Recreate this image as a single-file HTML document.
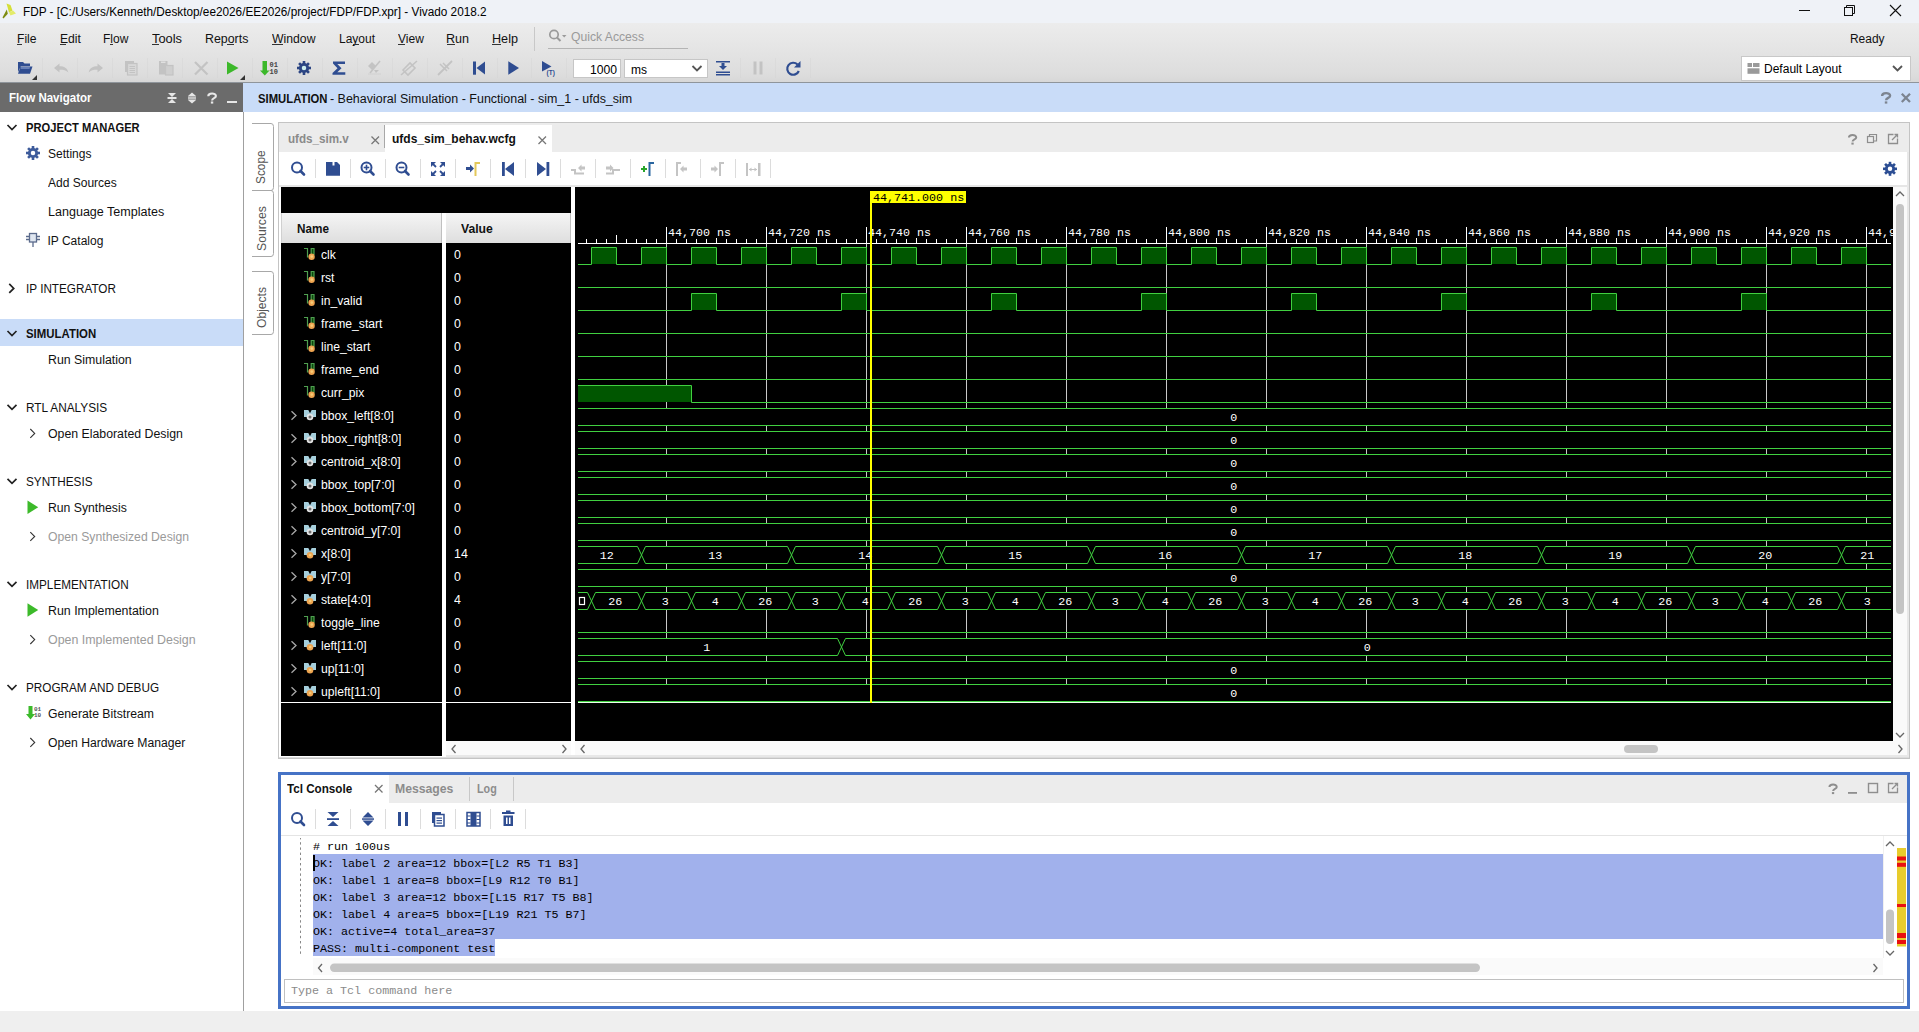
<!DOCTYPE html>
<html><head><meta charset="utf-8"><style>
html,body{margin:0;padding:0;width:1919px;height:1032px;overflow:hidden;background:#fff;}
body{position:relative;font-family:"Liberation Sans",sans-serif;}
div{position:absolute;box-sizing:border-box;}
.t{white-space:nowrap;}
svg{overflow:hidden;}
</style></head><body>
<div style="left:0px;top:0px;width:1919px;height:23px;background:#eff2f7;"></div>
<svg style="position:absolute;left:0px;top:0px;" width="22" height="23" viewBox="0 0 22 23"><path d="M2.5 17.5 L6.8 9.5 L7.8 13.8 L3.5 18.5 Z" fill="#7d8c12"/><path d="M6.5 3.5 L10.5 5 L12.5 10.5 L9 12.5 Z" fill="#d5df3a"/><path d="M9 12.5 L13 10.5 L16 13.5 L10.5 15.5 Z" fill="#e3eb6a"/></svg>
<div class="t" style="left:23.00px;top:6.00px;font-size:12px;line-height:13.20px;color:#000;font-weight:normal;font-family:'Liberation Sans', sans-serif;transform:scaleX(0.9818);transform-origin:0 0;">FDP - [C:/Users/Kenneth/Desktop/ee2026/EE2026/project/FDP/FDP.xpr] - Vivado 2018.2</div>
<svg style="position:absolute;left:1790px;top:0px;" width="129" height="23" viewBox="1790 0 129 23"><path d="M1799 10.5 H1810" stroke="#111" stroke-width="1"/><rect x="1844.5" y="7.5" width="8" height="8" fill="none" stroke="#111"/><path d="M1846.5 7.5 V5.5 H1854.5 V13.5 H1852.5" fill="none" stroke="#111"/><path d="M1890 5 L1901 16 M1901 5 L1890 16" stroke="#111" stroke-width="1.1"/></svg>
<div style="left:0px;top:23px;width:1919px;height:60px;background:linear-gradient(#ececec,#e7e7e7 30%,#dddddd 85%,#d7d7d7);"></div>
<div style="left:0px;top:82px;width:1919px;height:1px;background:#8f959b;"></div>
<div class="t" style="left:17.00px;top:33.00px;font-size:12px;line-height:13.20px;color:#111;font-weight:normal;font-family:'Liberation Sans', sans-serif;transform:scaleX(1.0093);transform-origin:0 0;">File</div>
<div class="t" style="left:60.00px;top:33.00px;font-size:12px;line-height:13.20px;color:#111;font-weight:normal;font-family:'Liberation Sans', sans-serif;transform:scaleX(1.0116);transform-origin:0 0;">Edit</div>
<div class="t" style="left:103.00px;top:33.00px;font-size:12px;line-height:13.20px;color:#111;font-weight:normal;font-family:'Liberation Sans', sans-serif;transform:scaleX(1.0024);transform-origin:0 0;">Flow</div>
<div class="t" style="left:152.00px;top:33.00px;font-size:12px;line-height:13.20px;color:#111;font-weight:normal;font-family:'Liberation Sans', sans-serif;transform:scaleX(1.0730);transform-origin:0 0;">Tools</div>
<div class="t" style="left:205.00px;top:33.00px;font-size:12px;line-height:13.20px;color:#111;font-weight:normal;font-family:'Liberation Sans', sans-serif;transform:scaleX(1.0310);transform-origin:0 0;">Reports</div>
<div class="t" style="left:272.00px;top:33.00px;font-size:12px;line-height:13.20px;color:#111;font-weight:normal;font-family:'Liberation Sans', sans-serif;transform:scaleX(1.0183);transform-origin:0 0;">Window</div>
<div class="t" style="left:339.00px;top:33.00px;font-size:12px;line-height:13.20px;color:#111;font-weight:normal;font-family:'Liberation Sans', sans-serif;transform:scaleX(1.0000);transform-origin:0 0;">Layout</div>
<div class="t" style="left:398.00px;top:33.00px;font-size:12px;line-height:13.20px;color:#111;font-weight:normal;font-family:'Liberation Sans', sans-serif;transform:scaleX(1.0031);transform-origin:0 0;">View</div>
<div class="t" style="left:446.00px;top:33.00px;font-size:12px;line-height:13.20px;color:#111;font-weight:normal;font-family:'Liberation Sans', sans-serif;transform:scaleX(1.0474);transform-origin:0 0;">Run</div>
<div class="t" style="left:492.00px;top:33.00px;font-size:12px;line-height:13.20px;color:#111;font-weight:normal;font-family:'Liberation Sans', sans-serif;transform:scaleX(1.0518);transform-origin:0 0;">Help</div>
<div style="left:17px;top:44px;width:5px;height:1px;background:#333;"></div>
<div style="left:60px;top:44px;width:6px;height:1px;background:#333;"></div>
<div style="left:110px;top:44px;width:3px;height:1px;background:#333;"></div>
<div style="left:152px;top:44px;width:7px;height:1px;background:#333;"></div>
<div style="left:227px;top:44px;width:7px;height:1px;background:#333;"></div>
<div style="left:272px;top:44px;width:11px;height:1px;background:#333;"></div>
<div style="left:353px;top:44px;width:6px;height:1px;background:#333;"></div>
<div style="left:398px;top:44px;width:7px;height:1px;background:#333;"></div>
<div style="left:447px;top:44px;width:8px;height:1px;background:#333;"></div>
<div style="left:492px;top:44px;width:9px;height:1px;background:#333;"></div>
<div style="left:534px;top:27px;width:1px;height:24px;background:#c8c8c8;"></div>
<svg style="position:absolute;left:545px;top:27px;" width="30" height="20" viewBox="545 27 30 20"><circle cx="554" cy="34.5" r="4.2" fill="none" stroke="#9a9a9a" stroke-width="1.7"/><path d="M557 37.5 L560.5 41" stroke="#9a9a9a" stroke-width="2"/><path d="M562 35 L566.5 35 L564.2 37.5 Z" fill="#9a9a9a"/></svg>
<div class="t" style="left:571.00px;top:31.00px;font-size:12px;line-height:13.20px;color:#9a9a9a;font-weight:normal;font-family:'Liberation Sans', sans-serif;transform:scaleX(1.0139);transform-origin:0 0;">Quick Access</div>
<div style="left:548px;top:48px;width:140px;height:1px;background:#b4b4b4;"></div>
<div class="t" style="left:1850.00px;top:33.00px;font-size:12px;line-height:13.20px;color:#111;font-weight:normal;font-family:'Liberation Sans', sans-serif;transform:scaleX(0.9948);transform-origin:0 0;">Ready</div>
<div style="left:573px;top:59px;width:48px;height:19px;background:#fff;border:1px solid #c6c6c6;"></div>
<div class="t" style="left:590.00px;top:64.00px;font-size:12px;line-height:13.20px;color:#000;font-weight:normal;font-family:'Liberation Sans', sans-serif;transform:scaleX(1.0135);transform-origin:0 0;">1000</div>
<div style="left:624px;top:59px;width:84px;height:19px;background:#fff;border:1px solid #c6c6c6;"></div>
<div class="t" style="left:631.00px;top:64.00px;font-size:12px;line-height:13.20px;color:#000;font-weight:normal;font-family:'Liberation Sans', sans-serif;transform:scaleX(1.0025);transform-origin:0 0;">ms</div>
<svg style="position:absolute;left:0px;top:52px;" width="830" height="31" viewBox="0 52 830 31"><path d="M18 62 H23 L24.5 63.5 H30 V66 H21 L18 72 Z" fill="#2f4d91"/><path d="M20.5 66.5 H32.5 L30 73.8 H18 Z" fill="#2f4d91"/><path d="M21 67.5 H30 L29.5 68.5 H20.5Z" fill="#9fb3df"/><path d="M37 75 V80 H32 Z" fill="#333"/><path d="M54 68 L59.5 63.5 V66.3 C64 66.3 67.5 68 68.3 72.5 C66.5 70.2 63.5 69.7 59.5 69.7 V72.5 Z" fill="#c3c3c3"/><path d="M103 68 L97.5 63.5 V66.3 C93 66.3 89.5 68 88.7 72.5 C90.5 70.2 93.5 69.7 97.5 69.7 V72.5 Z" fill="#c3c3c3"/><rect x="125" y="61" width="9" height="11" fill="#c3c3c3"/><rect x="127.5" y="63.5" width="9.5" height="11.5" fill="#d8d8d8" stroke="#c3c3c3" stroke-width="1.2"/><path d="M129.5 66.5 H135" stroke="#c3c3c3" stroke-width="1"/><path d="M129.5 68.5 H135" stroke="#c3c3c3" stroke-width="1"/><path d="M129.5 70.5 H135" stroke="#c3c3c3" stroke-width="1"/><path d="M129.5 72.5 H135" stroke="#c3c3c3" stroke-width="1"/><rect x="159" y="61" width="8.5" height="13.5" fill="#c3c3c3"/><rect x="165.5" y="65.5" width="7.5" height="9.5" fill="#cfcfcf" stroke="#c3c3c3" stroke-width="1.2"/><rect x="161" y="61.5" width="4.5" height="1.5" fill="#e0e0e0"/><path d="M195 62 L207.5 74.5 M207.5 62 L195 74.5" stroke="#c3c3c3" stroke-width="2.2"/><path d="M227 61.6 L238.5 68 L227 74.5 Z" fill="#3cb82a"/><path d="M245 75 V80 H240 Z" fill="#333"/><path d="M262.5 61 H267 V70.5 H269.5 L264.8 75.5 L260 70.5 H262.5 Z" fill="#3cb82a"/><text x="269.5" y="67" font-family="Liberation Mono" font-weight="bold" font-size="7" fill="#444">01</text><text x="269.5" y="74" font-family="Liberation Mono" font-weight="bold" font-size="7" fill="#444">10</text><rect x="302.7" y="61" width="2.6" height="3.6" fill="#2c4583" transform="rotate(0 304 68)"/><rect x="302.7" y="61" width="2.6" height="3.6" fill="#2c4583" transform="rotate(45 304 68)"/><rect x="302.7" y="61" width="2.6" height="3.6" fill="#2c4583" transform="rotate(90 304 68)"/><rect x="302.7" y="61" width="2.6" height="3.6" fill="#2c4583" transform="rotate(135 304 68)"/><rect x="302.7" y="61" width="2.6" height="3.6" fill="#2c4583" transform="rotate(180 304 68)"/><rect x="302.7" y="61" width="2.6" height="3.6" fill="#2c4583" transform="rotate(225 304 68)"/><rect x="302.7" y="61" width="2.6" height="3.6" fill="#2c4583" transform="rotate(270 304 68)"/><rect x="302.7" y="61" width="2.6" height="3.6" fill="#2c4583" transform="rotate(315 304 68)"/><circle cx="304" cy="68" r="5.109999999999999" fill="#2c4583"/><circle cx="304" cy="68" r="2.24" fill="#cdeeee"/><path d="M333 61.5 H345 V64 H337.3 L341.5 68.2 L337.3 72.3 H345.3 V74.7 H332.5 V73 L337.5 68.2 L333 63.4 Z" fill="#2f4d91"/><path d="M368 74 H381" stroke="#d4d4d4" stroke-width="1.5"/><path d="M368 66 L372 62 L376 66 L372 70 Z" fill="#c3c3c3"/><path d="M370 73 L380 61" stroke="#c3c3c3" stroke-width="1.6"/><path d="M374 70 L379 70 L376 73Z" fill="#c3c3c3"/><path d="M403 70 L410 63 L415 68 L408 75 Z" fill="none" stroke="#c3c3c3" stroke-width="1.6"/><path d="M401 75 L417 61" stroke="#c3c3c3" stroke-width="1.6"/><path d="M438 75 L452 61" stroke="#c3c3c3" stroke-width="1.8"/><path d="M440 64 L447 71 M443 63 L449 69" stroke="#c3c3c3" stroke-width="1.5"/><rect x="473" y="61.5" width="3" height="13.2" fill="#2f4d91"/><path d="M485 61.5 V74.5 L476.5 68 Z" fill="#2f4d91"/><path d="M508.3 61.2 L519 68 L508.3 74.7 Z" fill="#2f4d91"/><path d="M542 61 L551.5 66.5 L542 71.5 Z" fill="#2f4d91"/><text x="546.5" y="75" font-family="Liberation Sans" font-weight="bold" font-size="6.5" fill="#2f4d91">(T)</text><path d="M692.5 66 L697 70.5 L701.5 66" fill="none" stroke="#555" stroke-width="1.8"/><rect x="716" y="61" width="14" height="1.5" fill="#2f4d91"/><path d="M721.5 63 H724.5 V66 H727 L723 70 L719 66 H721.5 Z" fill="#2f4d91"/><rect x="716" y="71.5" width="14" height="1.5" fill="#2f4d91"/><rect x="716" y="74" width="14" height="1.5" fill="#2f4d91"/><rect x="753.5" y="61.5" width="3" height="13" fill="#c3c3c3"/><rect x="759.5" y="61.5" width="3" height="13" fill="#c3c3c3"/><path d="M797.5 64.5 A6 6 0 1 0 798.8 71" fill="none" stroke="#2f4d91" stroke-width="2.2"/><path d="M800.5 61 V67.5 H794 Z" fill="#2f4d91"/><rect x="42" y="58" width="1" height="20" fill="#d0d0d0" opacity="0.35"/><rect x="77" y="58" width="1" height="20" fill="#d0d0d0" opacity="0.35"/><rect x="112" y="58" width="1" height="20" fill="#d0d0d0" opacity="0.35"/><rect x="147" y="58" width="1" height="20" fill="#d0d0d0" opacity="0.35"/><rect x="182" y="58" width="1" height="20" fill="#d0d0d0" opacity="0.35"/><rect x="217" y="58" width="1" height="20" fill="#d0d0d0" opacity="0.35"/><rect x="252" y="58" width="1" height="20" fill="#d0d0d0" opacity="0.35"/><rect x="287" y="58" width="1" height="20" fill="#d0d0d0" opacity="0.35"/><rect x="322" y="58" width="1" height="20" fill="#d0d0d0" opacity="0.35"/><rect x="357" y="58" width="1" height="20" fill="#d0d0d0" opacity="0.35"/><rect x="392" y="58" width="1" height="20" fill="#d0d0d0" opacity="0.35"/><rect x="427" y="58" width="1" height="20" fill="#d0d0d0" opacity="0.35"/><rect x="462" y="58" width="1" height="20" fill="#d0d0d0" opacity="0.35"/><rect x="497" y="58" width="1" height="20" fill="#d0d0d0" opacity="0.35"/><rect x="531" y="58" width="1" height="20" fill="#d0d0d0" opacity="0.35"/><rect x="566" y="58" width="1" height="20" fill="#d0d0d0" opacity="0.35"/><rect x="740" y="58" width="1" height="20" fill="#d0d0d0" opacity="0.35"/><rect x="775" y="58" width="1" height="20" fill="#d0d0d0" opacity="0.35"/><rect x="810" y="58" width="1" height="20" fill="#d0d0d0" opacity="0.35"/></svg>
<div style="left:1741px;top:56px;width:170px;height:25px;background:#fff;border:1px solid #c8c8c8;"></div>
<svg style="position:absolute;left:1745px;top:60px;" width="20" height="18" viewBox="1745 60 20 18"><rect x="1747.5" y="63" width="4.5" height="4" fill="#9a9a9a"/><rect x="1753" y="63" width="6.5" height="4" fill="#9a9a9a"/><rect x="1747.5" y="68.3" width="12" height="5.5" fill="#9a9a9a"/></svg>
<div class="t" style="left:1764.00px;top:63.00px;font-size:12px;line-height:13.20px;color:#000;font-weight:normal;font-family:'Liberation Sans', sans-serif;transform:scaleX(1.0013);transform-origin:0 0;">Default Layout</div>
<svg style="position:absolute;left:1880px;top:60px;" width="25" height="18" viewBox="1880 60 25 18"><path d="M1893 66 L1897.5 70.5 L1902 66" fill="none" stroke="#555" stroke-width="1.8"/></svg>
<div style="left:0px;top:83px;width:243px;height:29px;background:#6b6b6b;"></div>
<div class="t" style="left:9.00px;top:92.00px;font-size:12px;line-height:13.20px;color:#fff;font-weight:bold;font-family:'Liberation Sans', sans-serif;transform:scaleX(0.9589);transform-origin:0 0;">Flow Navigator</div>
<svg style="position:absolute;left:160px;top:86px;" width="83" height="24" viewBox="160 86 83 24"><path d="M168 93 H176 L172 97 Z" fill="#e6e6e6"/><rect x="167.5" y="97" width="9" height="2" fill="#e6e6e6"/><path d="M168 103 H176 L172 99 Z" fill="#e6e6e6"/><path d="M188 96 L192 92.5 L196 96 Z" fill="#e6e6e6"/><rect x="188" y="96.5" width="8" height="1.2" fill="#e6e6e6"/><rect x="188" y="98.3" width="8" height="1.2" fill="#e6e6e6"/><path d="M188 100 L192 103.5 L196 100 Z" fill="#e6e6e6"/><path d="M208.27 96.23 C208.27 92.69 215.92 92.69 215.92 96.04 C215.92 98.43 212.10 97.86 212.10 100.44" fill="none" stroke="#e8e8e8" stroke-width="2.1"/><rect x="210.85" y="101.49" width="2.39" height="2.10" fill="#e8e8e8"/><rect x="227" y="101" width="10" height="2" fill="#e6e6e6"/></svg>
<div style="left:243px;top:83px;width:1676px;height:29px;background:#c9dcf8;"></div>
<div class="t" style="left:258.00px;top:93.00px;font-size:12px;line-height:13.20px;color:#111;font-weight:bold;font-family:'Liberation Sans', sans-serif;transform:scaleX(0.9417);transform-origin:0 0;">SIMULATION</div>
<div class="t" style="left:329.80px;top:93.00px;font-size:12px;line-height:13.20px;color:#111;font-weight:normal;font-family:'Liberation Sans', sans-serif;transform:scaleX(1.0393);transform-origin:0 0;">- Behavioral Simulation - Functional - sim_1 - ufds_sim</div>
<svg style="position:absolute;left:1875px;top:88px;" width="40" height="20" viewBox="1875 88 40 20"><path d="M1882.10 95.90 C1882.10 92.20 1890.10 92.20 1890.10 95.70 C1890.10 98.20 1886.10 97.60 1886.10 100.30" fill="none" stroke="#7c8490" stroke-width="2.4"/><rect x="1884.80" y="101.40" width="2.50" height="2.20" fill="#7c8490"/><path d="M1901.8 93.8 L1910 102 M1910 93.8 L1901.8 102" stroke="#7c8490" stroke-width="2.3"/></svg>
<div style="left:243px;top:112px;width:1px;height:899px;background:#a0a0a0;"></div>
<div style="left:0px;top:319px;width:243px;height:27px;background:#c9dcf8;"></div>
<div class="t" style="left:26.30px;top:122.00px;font-size:12px;line-height:13.20px;color:#111;font-weight:bold;font-family:'Liberation Sans', sans-serif;transform:scaleX(0.9317);transform-origin:0 0;">PROJECT MANAGER</div>
<div class="t" style="left:26.30px;top:283.00px;font-size:12px;line-height:13.20px;color:#111;font-weight:normal;font-family:'Liberation Sans', sans-serif;transform:scaleX(0.9778);transform-origin:0 0;">IP INTEGRATOR</div>
<div class="t" style="left:26.30px;top:328.00px;font-size:12px;line-height:13.20px;color:#111;font-weight:bold;font-family:'Liberation Sans', sans-serif;transform:scaleX(0.9512);transform-origin:0 0;">SIMULATION</div>
<div class="t" style="left:26.30px;top:402.00px;font-size:12px;line-height:13.20px;color:#111;font-weight:normal;font-family:'Liberation Sans', sans-serif;transform:scaleX(0.9850);transform-origin:0 0;">RTL ANALYSIS</div>
<div class="t" style="left:26.30px;top:476.00px;font-size:12px;line-height:13.20px;color:#111;font-weight:normal;font-family:'Liberation Sans', sans-serif;transform:scaleX(0.9774);transform-origin:0 0;">SYNTHESIS</div>
<div class="t" style="left:26.30px;top:579.00px;font-size:12px;line-height:13.20px;color:#111;font-weight:normal;font-family:'Liberation Sans', sans-serif;transform:scaleX(0.9783);transform-origin:0 0;">IMPLEMENTATION</div>
<div class="t" style="left:26.30px;top:682.00px;font-size:12px;line-height:13.20px;color:#111;font-weight:normal;font-family:'Liberation Sans', sans-serif;transform:scaleX(0.9781);transform-origin:0 0;">PROGRAM AND DEBUG</div>
<div class="t" style="left:47.50px;top:148.00px;font-size:12px;line-height:13.20px;color:#111;font-weight:normal;font-family:'Liberation Sans', sans-serif;transform:scaleX(1.0018);transform-origin:0 0;">Settings</div>
<div class="t" style="left:47.50px;top:177.00px;font-size:12px;line-height:13.20px;color:#111;font-weight:normal;font-family:'Liberation Sans', sans-serif;transform:scaleX(1.0006);transform-origin:0 0;">Add Sources</div>
<div class="t" style="left:47.50px;top:206.00px;font-size:12px;line-height:13.20px;color:#111;font-weight:normal;font-family:'Liberation Sans', sans-serif;transform:scaleX(1.0455);transform-origin:0 0;">Language Templates</div>
<div class="t" style="left:47.50px;top:235.00px;font-size:12px;line-height:13.20px;color:#111;font-weight:normal;font-family:'Liberation Sans', sans-serif;transform:scaleX(1.0000);transform-origin:0 0;">IP Catalog</div>
<div class="t" style="left:47.50px;top:354.00px;font-size:12px;line-height:13.20px;color:#111;font-weight:normal;font-family:'Liberation Sans', sans-serif;transform:scaleX(1.0288);transform-origin:0 0;">Run Simulation</div>
<div class="t" style="left:47.50px;top:428.00px;font-size:12px;line-height:13.20px;color:#111;font-weight:normal;font-family:'Liberation Sans', sans-serif;transform:scaleX(1.0259);transform-origin:0 0;">Open Elaborated Design</div>
<div class="t" style="left:47.50px;top:502.00px;font-size:12px;line-height:13.20px;color:#111;font-weight:normal;font-family:'Liberation Sans', sans-serif;transform:scaleX(1.0181);transform-origin:0 0;">Run Synthesis</div>
<div class="t" style="left:47.50px;top:531.00px;font-size:12px;line-height:13.20px;color:#9a9a9a;font-weight:normal;font-family:'Liberation Sans', sans-serif;transform:scaleX(1.0164);transform-origin:0 0;">Open Synthesized Design</div>
<div class="t" style="left:47.50px;top:605.00px;font-size:12px;line-height:13.20px;color:#111;font-weight:normal;font-family:'Liberation Sans', sans-serif;transform:scaleX(1.0317);transform-origin:0 0;">Run Implementation</div>
<div class="t" style="left:47.50px;top:634.00px;font-size:12px;line-height:13.20px;color:#9a9a9a;font-weight:normal;font-family:'Liberation Sans', sans-serif;transform:scaleX(1.0345);transform-origin:0 0;">Open Implemented Design</div>
<div class="t" style="left:47.50px;top:708.00px;font-size:12px;line-height:13.20px;color:#111;font-weight:normal;font-family:'Liberation Sans', sans-serif;transform:scaleX(1.0188);transform-origin:0 0;">Generate Bitstream</div>
<div class="t" style="left:47.50px;top:737.00px;font-size:12px;line-height:13.20px;color:#111;font-weight:normal;font-family:'Liberation Sans', sans-serif;transform:scaleX(1.0143);transform-origin:0 0;">Open Hardware Manager</div>
<svg style="position:absolute;left:0px;top:112px;" width="243" height="650" viewBox="0 112 243 650"><path d="M7.5 125.0 L12 129.5 L16.5 125.0" fill="none" stroke="#222" stroke-width="1.7"/><path d="M9.25 283.9 L13.75 288.4 L9.25 292.9" fill="none" stroke="#222" stroke-width="1.7"/><path d="M7.5 331.0 L12 335.5 L16.5 331.0" fill="none" stroke="#222" stroke-width="1.7"/><path d="M7.5 404.8 L12 409.3 L16.5 404.8" fill="none" stroke="#222" stroke-width="1.7"/><path d="M7.5 478.8 L12 483.3 L16.5 478.8" fill="none" stroke="#222" stroke-width="1.7"/><path d="M7.5 581.9 L12 586.4 L16.5 581.9" fill="none" stroke="#222" stroke-width="1.7"/><path d="M7.5 685.0 L12 689.5 L16.5 685.0" fill="none" stroke="#222" stroke-width="1.7"/><rect x="31.7" y="146" width="2.6" height="3.4" fill="#3d5b9b" transform="rotate(0 33 153)"/><rect x="31.7" y="146" width="2.6" height="3.4" fill="#3d5b9b" transform="rotate(45 33 153)"/><rect x="31.7" y="146" width="2.6" height="3.4" fill="#3d5b9b" transform="rotate(90 33 153)"/><rect x="31.7" y="146" width="2.6" height="3.4" fill="#3d5b9b" transform="rotate(135 33 153)"/><rect x="31.7" y="146" width="2.6" height="3.4" fill="#3d5b9b" transform="rotate(180 33 153)"/><rect x="31.7" y="146" width="2.6" height="3.4" fill="#3d5b9b" transform="rotate(225 33 153)"/><rect x="31.7" y="146" width="2.6" height="3.4" fill="#3d5b9b" transform="rotate(270 33 153)"/><rect x="31.7" y="146" width="2.6" height="3.4" fill="#3d5b9b" transform="rotate(315 33 153)"/><circle cx="33" cy="153" r="5.109999999999999" fill="#3d5b9b"/><circle cx="33" cy="153" r="2.24" fill="#fff"/><rect x="29.5" y="233.5" width="7" height="8.5" fill="#dfe6f0" stroke="#5b6b8c" stroke-width="1.3"/><path d="M26 236.5 H29 M37 236.5 H40 M26 239.5 H29 M37 239.5 H40 M33 242 V247" stroke="#5b6b8c" stroke-width="1.3"/><path d="M30.3 429.0 L34.7 433.4 L30.3 437.79999999999995" fill="none" stroke="#333" stroke-width="1.1"/><path d="M30.3 532.1 L34.7 536.5 L30.3 540.9" fill="none" stroke="#333" stroke-width="1.1"/><path d="M30.3 635.2 L34.7 639.6 L30.3 644.0" fill="none" stroke="#333" stroke-width="1.1"/><path d="M30.3 738.0 L34.7 742.4 L30.3 746.8" fill="none" stroke="#333" stroke-width="1.1"/><path d="M27.5 500.4 L38.2 507.2 L27.5 514.0 Z" fill="#3cba2a"/><path d="M27.5 603.2 L38.2 610.0 L27.5 616.8 Z" fill="#3cba2a"/><path d="M28.5 706 H32.5 V714 H35 L30.5 719.5 L26 714 H28.5 Z" fill="#3cba2a"/><text x="34" y="711" font-family="Liberation Mono" font-weight="bold" font-size="6" fill="#555">01</text><text x="34" y="717" font-family="Liberation Mono" font-weight="bold" font-size="6" fill="#555">10</text></svg>
<div style="left:0px;top:1011px;width:1919px;height:21px;background:#efefef;"></div>
<svg style="position:absolute;left:248px;top:118px;" width="30" height="222" viewBox="248 118 30 222"><path d="M252 123.5 H271 Q273.5 123.5 273.5 126.5 V187.5 Q273.5 190.5 271 190.5 H252" fill="none" stroke="#a8a8a8" stroke-width="1"/><path d="M252 190.5 H271 Q273.5 190.5 273.5 193.5 V253.5 Q273.5 256.5 271 256.5 H252" fill="none" stroke="#a8a8a8" stroke-width="1"/><path d="M252 271.5 H271 Q273.5 271.5 273.5 274.5 V331.5 Q273.5 334.5 271 334.5 H252" fill="none" stroke="#a8a8a8" stroke-width="1"/></svg>
<div class="t" style="left:260.3px;top:184px;font-size:12px;line-height:12px;color:#555;font-family:'Liberation Sans', sans-serif;transform-origin:0 0;transform:rotate(-90deg) scaleX(0.989) translate(0,-5.3px);">Scope</div>
<div class="t" style="left:260.9px;top:251.3px;font-size:12px;line-height:12px;color:#555;font-family:'Liberation Sans', sans-serif;transform-origin:0 0;transform:rotate(-90deg) scaleX(1.020) translate(0,-5.3px);">Sources</div>
<div class="t" style="left:260.9px;top:328px;font-size:12px;line-height:12px;color:#555;font-family:'Liberation Sans', sans-serif;transform-origin:0 0;transform:rotate(-90deg) scaleX(1.008) translate(0,-5.3px);">Objects</div>
<div style="left:278px;top:122px;width:1632px;height:637px;border:1px solid #c4c4c4;background:#fff;"></div>
<div style="left:279px;top:123px;width:1630px;height:29px;background:#ececec;"></div>
<div style="left:385px;top:125px;width:167px;height:27px;background:#fff;"></div>
<div style="left:384px;top:125px;width:1px;height:23px;background:#a8a8a8;"></div>
<div class="t" style="left:287.60px;top:133.00px;font-size:12px;line-height:13.20px;color:#8a8a8a;font-weight:bold;font-family:'Liberation Sans', sans-serif;transform:scaleX(0.9704);transform-origin:0 0;">ufds_sim.v</div>
<div class="t" style="left:391.60px;top:133.00px;font-size:12px;line-height:13.20px;color:#111;font-weight:bold;font-family:'Liberation Sans', sans-serif;transform:scaleX(0.9997);transform-origin:0 0;">ufds_sim_behav.wcfg</div>
<svg style="position:absolute;left:360px;top:125px;" width="1550" height="27" viewBox="360 125 1550 27"><path d="M371.5 136.5 L379 144 M379 136.5 L371.5 144" stroke="#777" stroke-width="1.3"/><path d="M538.5 136.5 L546 144 M546 136.5 L538.5 144" stroke="#777" stroke-width="1.3"/><path d="M1848.94 137.56 C1848.94 134.18 1856.24 134.18 1856.24 137.38 C1856.24 139.66 1852.59 139.11 1852.59 141.58" fill="none" stroke="#8e8e8e" stroke-width="2.0"/><rect x="1851.40" y="142.58" width="2.28" height="2.01" fill="#8e8e8e"/><rect x="1867.5" y="136.5" width="6" height="6" fill="none" stroke="#8e8e8e" stroke-width="1.2"/><path d="M1869.5 136.5 V134.5 H1876.5 V141 H1873.5" fill="none" stroke="#8e8e8e" stroke-width="1.2"/><path d="M1893.5 134.5 H1888.5 V143.5 H1897.5 V138.5" fill="none" stroke="#8e8e8e" stroke-width="1.3"/><path d="M1892 140 L1897.5 134.5 M1894.5 134.5 H1897.5 V137.5" fill="none" stroke="#8e8e8e" stroke-width="1.3"/></svg>
<svg style="position:absolute;left:279px;top:152px;" width="1628" height="34" viewBox="279 152 1628 34"><rect x="315" y="159" width="1" height="19" fill="#dcdcdc"/><rect x="350" y="159" width="1" height="19" fill="#dcdcdc"/><rect x="385" y="159" width="1" height="19" fill="#dcdcdc"/><rect x="420" y="159" width="1" height="19" fill="#dcdcdc"/><rect x="455" y="159" width="1" height="19" fill="#dcdcdc"/><rect x="490" y="159" width="1" height="19" fill="#dcdcdc"/><rect x="525" y="159" width="1" height="19" fill="#dcdcdc"/><rect x="560" y="159" width="1" height="19" fill="#dcdcdc"/><rect x="595" y="159" width="1" height="19" fill="#dcdcdc"/><rect x="630" y="159" width="1" height="19" fill="#dcdcdc"/><rect x="665" y="159" width="1" height="19" fill="#dcdcdc"/><rect x="700" y="159" width="1" height="19" fill="#dcdcdc"/><rect x="735" y="159" width="1" height="19" fill="#dcdcdc"/><rect x="770" y="159" width="1" height="19" fill="#dcdcdc"/><circle cx="297" cy="167.5" r="5" fill="none" stroke="#2f4d91" stroke-width="2"/><path d="M300.5 171.0 L304 174.5" stroke="#2f4d91" stroke-width="2.6" stroke-linecap="round"/><path d="M326 162 H337 L340 165 V175.8 H326 Z" fill="#2f4d91"/><rect x="332.5" y="162" width="2" height="3.5" fill="#fff"/><circle cx="366.5" cy="167.5" r="5" fill="none" stroke="#2f4d91" stroke-width="2"/><path d="M370.0 171.0 L373.5 174.5" stroke="#2f4d91" stroke-width="2.6" stroke-linecap="round"/><path d="M363.7 167.5 H369.3" stroke="#2f4d91" stroke-width="1.6"/><path d="M366.5 164.7 V170.3" stroke="#2f4d91" stroke-width="1.6"/><circle cx="401.5" cy="167.5" r="5" fill="none" stroke="#2f4d91" stroke-width="2"/><path d="M405.0 171.0 L408.5 174.5" stroke="#2f4d91" stroke-width="2.6" stroke-linecap="round"/><path d="M398.7 167.5 H404.3" stroke="#2f4d91" stroke-width="1.6"/><path d="M431 162 H436 L431 167 Z" fill="#2f4d91"/><path d="M433 164 L436 167" stroke="#2f4d91" stroke-width="1.8"/><path d="M445 162 H440 L445 167 Z" fill="#2f4d91"/><path d="M443 164 L440 167" stroke="#2f4d91" stroke-width="1.8"/><path d="M431 176 H436 L431 171 Z" fill="#2f4d91"/><path d="M433 174 L436 171" stroke="#2f4d91" stroke-width="1.8"/><path d="M445 176 H440 L445 171 Z" fill="#2f4d91"/><path d="M443 174 L440 171" stroke="#2f4d91" stroke-width="1.8"/><path d="M466 167 H470 V164.5 L474 168.5 L470 172.5 V170 H466 Z" fill="#2f4d91"/><path d="M475.5 176 V163 H480" fill="none" stroke="#e3c85a" stroke-width="2"/><rect x="502" y="162" width="2.8" height="14" fill="#2f4d91"/><path d="M514 162 V176 L505 169 Z" fill="#2f4d91"/><path d="M537 162 V176 L546 169 Z" fill="#2f4d91"/><rect x="546.5" y="162" width="2.8" height="14" fill="#2f4d91"/><path d="M571 170 H575 V173.5 H584" fill="none" stroke="#c4c4c4" stroke-width="2"/><path d="M578 168 L581.5 164.5 V166.5 H585 V169.5 H581.5 V171.5 Z" fill="#c4c4c4"/><path d="M606 173.5 H613 V170 H620" fill="none" stroke="#c4c4c4" stroke-width="2"/><path d="M606 166.5 H610 V164.5 L613.5 168 L610 171.5 V169.5 H606 Z" fill="#c4c4c4"/><path d="M641 169 H647 M644 166 V172" stroke="#2aa52a" stroke-width="2"/><path d="M649.5 176 V163 H654" fill="none" stroke="#2a66a0" stroke-width="2"/><path d="M677 176 V163 H681" fill="none" stroke="#c4c4c4" stroke-width="2"/><path d="M680 169 L683.5 165.5 V167.5 H687 V170.5 H683.5 V172.5 Z" fill="#c4c4c4"/><path d="M711 167.5 H714.5 V165.5 L718 169 L714.5 172.5 V170.5 H711 Z" fill="#c4c4c4"/><path d="M720 176 V163 H724" fill="none" stroke="#c4c4c4" stroke-width="2"/><rect x="746" y="163" width="2" height="13" fill="#c4c4c4"/><rect x="758" y="163" width="2.5" height="13" fill="#c4c4c4"/><path d="M749 169.5 H757" stroke="#c4c4c4" stroke-width="1"/><path d="M749 169.5 L751.5 167.5 V171.5Z M757 169.5 L754.5 167.5 V171.5Z" fill="#c4c4c4"/><rect x="1888.7" y="161.8" width="2.6" height="3.6" fill="#2c4e94" transform="rotate(0 1890 168.8)"/><rect x="1888.7" y="161.8" width="2.6" height="3.6" fill="#2c4e94" transform="rotate(45 1890 168.8)"/><rect x="1888.7" y="161.8" width="2.6" height="3.6" fill="#2c4e94" transform="rotate(90 1890 168.8)"/><rect x="1888.7" y="161.8" width="2.6" height="3.6" fill="#2c4e94" transform="rotate(135 1890 168.8)"/><rect x="1888.7" y="161.8" width="2.6" height="3.6" fill="#2c4e94" transform="rotate(180 1890 168.8)"/><rect x="1888.7" y="161.8" width="2.6" height="3.6" fill="#2c4e94" transform="rotate(225 1890 168.8)"/><rect x="1888.7" y="161.8" width="2.6" height="3.6" fill="#2c4e94" transform="rotate(270 1890 168.8)"/><rect x="1888.7" y="161.8" width="2.6" height="3.6" fill="#2c4e94" transform="rotate(315 1890 168.8)"/><circle cx="1890" cy="168.8" r="5.109999999999999" fill="#2c4e94"/><circle cx="1890" cy="168.8" r="2.24" fill="#fff"/></svg>
<div style="left:279px;top:185px;width:1628px;height:2px;background:#e6e6e6;"></div>
<div style="left:281px;top:187px;width:290px;height:26px;background:#000;"></div>
<div style="left:281px;top:213px;width:161px;height:30px;background:linear-gradient(#f5f5f5,#dedede);border-right:1px solid #c0c0c0;border-left:1px solid #d0d0d0;"></div>
<div style="left:446px;top:213px;width:125px;height:30px;background:linear-gradient(#f5f5f5,#dedede);border-right:1px solid #c0c0c0;"></div>
<div class="t" style="left:296.50px;top:223.00px;font-size:12px;line-height:13.20px;color:#111;font-weight:bold;font-family:'Liberation Sans', sans-serif;transform:scaleX(0.9773);transform-origin:0 0;">Name</div>
<div class="t" style="left:461.00px;top:223.00px;font-size:12px;line-height:13.20px;color:#111;font-weight:bold;font-family:'Liberation Sans', sans-serif;transform:scaleX(1.0153);transform-origin:0 0;">Value</div>
<div style="left:281px;top:243px;width:161px;height:513px;background:#000;"></div>
<div style="left:446px;top:243px;width:125px;height:498px;background:#000;"></div>
<div style="left:575px;top:187px;width:1318px;height:554px;background:#000;"></div>
<div style="left:281px;top:702px;width:161px;height:1px;background:#fff;"></div>
<div style="left:446px;top:702px;width:125px;height:1px;background:#fff;"></div>
<div style="left:446px;top:741px;width:125px;height:16px;background:#fafafa;"></div>
<div style="left:575px;top:741px;width:1333px;height:16px;background:#fafafa;"></div>
<div style="left:446px;top:755px;width:1462px;height:2px;background:#e8e8e8;"></div>
<div style="left:279px;top:757px;width:1630px;height:1px;background:#dcdcdc;"></div>
<svg style="position:absolute;left:440px;top:740px;" width="1470" height="18" viewBox="440 740 1470 18"><path d="M455.5 745 L452 749 L455.5 753" fill="none" stroke="#666" stroke-width="1.3"/><path d="M562.5 745 L566 749 L562.5 753" fill="none" stroke="#666" stroke-width="1.3"/><path d="M584.5 745 L581 749 L584.5 753" fill="none" stroke="#666" stroke-width="1.3"/><path d="M1898.5 745 L1902 749 L1898.5 753" fill="none" stroke="#666" stroke-width="1.3"/><rect x="1624" y="745" width="34" height="8" rx="4" fill="#c4c4c4"/></svg>
<div style="left:1893px;top:187px;width:15px;height:554px;background:#fafafa;"></div>
<div style="left:1907px;top:152px;width:2px;height:605px;background:#e8e8e8;"></div>
<svg style="position:absolute;left:1893px;top:187px;" width="15" height="554" viewBox="1893 187 15 554"><path d="M1896 196 L1900 192 L1904 196" fill="none" stroke="#666" stroke-width="1.3"/><path d="M1896 733 L1900 737 L1904 733" fill="none" stroke="#666" stroke-width="1.3"/><rect x="1896" y="204" width="8" height="410" rx="4" fill="#c4c4c4"/></svg>
<div class="t" style="left:320.60px;top:249.00px;font-size:12px;line-height:13.20px;color:#fff;font-weight:normal;font-family:'Liberation Sans', sans-serif;transform:scaleX(1.0125);transform-origin:0 0;">clk</div>
<div class="t" style="left:453.70px;top:249.00px;font-size:12px;line-height:13.20px;color:#fff;font-weight:normal;font-family:'Liberation Sans', sans-serif;transform:scaleX(1.0333);transform-origin:0 0;">0</div>
<div class="t" style="left:320.60px;top:272.00px;font-size:12px;line-height:13.20px;color:#fff;font-weight:normal;font-family:'Liberation Sans', sans-serif;transform:scaleX(1.0125);transform-origin:0 0;">rst</div>
<div class="t" style="left:453.70px;top:272.00px;font-size:12px;line-height:13.20px;color:#fff;font-weight:normal;font-family:'Liberation Sans', sans-serif;transform:scaleX(1.0333);transform-origin:0 0;">0</div>
<div class="t" style="left:320.60px;top:295.00px;font-size:12px;line-height:13.20px;color:#fff;font-weight:normal;font-family:'Liberation Sans', sans-serif;transform:scaleX(1.0125);transform-origin:0 0;">in_valid</div>
<div class="t" style="left:453.70px;top:295.00px;font-size:12px;line-height:13.20px;color:#fff;font-weight:normal;font-family:'Liberation Sans', sans-serif;transform:scaleX(1.0333);transform-origin:0 0;">0</div>
<div class="t" style="left:320.60px;top:318.00px;font-size:12px;line-height:13.20px;color:#fff;font-weight:normal;font-family:'Liberation Sans', sans-serif;transform:scaleX(1.0125);transform-origin:0 0;">frame_start</div>
<div class="t" style="left:453.70px;top:318.00px;font-size:12px;line-height:13.20px;color:#fff;font-weight:normal;font-family:'Liberation Sans', sans-serif;transform:scaleX(1.0333);transform-origin:0 0;">0</div>
<div class="t" style="left:320.60px;top:341.00px;font-size:12px;line-height:13.20px;color:#fff;font-weight:normal;font-family:'Liberation Sans', sans-serif;transform:scaleX(1.0125);transform-origin:0 0;">line_start</div>
<div class="t" style="left:453.70px;top:341.00px;font-size:12px;line-height:13.20px;color:#fff;font-weight:normal;font-family:'Liberation Sans', sans-serif;transform:scaleX(1.0333);transform-origin:0 0;">0</div>
<div class="t" style="left:320.60px;top:364.00px;font-size:12px;line-height:13.20px;color:#fff;font-weight:normal;font-family:'Liberation Sans', sans-serif;transform:scaleX(1.0125);transform-origin:0 0;">frame_end</div>
<div class="t" style="left:453.70px;top:364.00px;font-size:12px;line-height:13.20px;color:#fff;font-weight:normal;font-family:'Liberation Sans', sans-serif;transform:scaleX(1.0333);transform-origin:0 0;">0</div>
<div class="t" style="left:320.60px;top:387.00px;font-size:12px;line-height:13.20px;color:#fff;font-weight:normal;font-family:'Liberation Sans', sans-serif;transform:scaleX(1.0125);transform-origin:0 0;">curr_pix</div>
<div class="t" style="left:453.70px;top:387.00px;font-size:12px;line-height:13.20px;color:#fff;font-weight:normal;font-family:'Liberation Sans', sans-serif;transform:scaleX(1.0333);transform-origin:0 0;">0</div>
<div class="t" style="left:320.60px;top:410.00px;font-size:12px;line-height:13.20px;color:#fff;font-weight:normal;font-family:'Liberation Sans', sans-serif;transform:scaleX(1.0125);transform-origin:0 0;">bbox_left[8:0]</div>
<div class="t" style="left:453.70px;top:410.00px;font-size:12px;line-height:13.20px;color:#fff;font-weight:normal;font-family:'Liberation Sans', sans-serif;transform:scaleX(1.0333);transform-origin:0 0;">0</div>
<div class="t" style="left:320.60px;top:433.00px;font-size:12px;line-height:13.20px;color:#fff;font-weight:normal;font-family:'Liberation Sans', sans-serif;transform:scaleX(1.0125);transform-origin:0 0;">bbox_right[8:0]</div>
<div class="t" style="left:453.70px;top:433.00px;font-size:12px;line-height:13.20px;color:#fff;font-weight:normal;font-family:'Liberation Sans', sans-serif;transform:scaleX(1.0333);transform-origin:0 0;">0</div>
<div class="t" style="left:320.60px;top:456.00px;font-size:12px;line-height:13.20px;color:#fff;font-weight:normal;font-family:'Liberation Sans', sans-serif;transform:scaleX(1.0125);transform-origin:0 0;">centroid_x[8:0]</div>
<div class="t" style="left:453.70px;top:456.00px;font-size:12px;line-height:13.20px;color:#fff;font-weight:normal;font-family:'Liberation Sans', sans-serif;transform:scaleX(1.0333);transform-origin:0 0;">0</div>
<div class="t" style="left:320.60px;top:479.00px;font-size:12px;line-height:13.20px;color:#fff;font-weight:normal;font-family:'Liberation Sans', sans-serif;transform:scaleX(1.0125);transform-origin:0 0;">bbox_top[7:0]</div>
<div class="t" style="left:453.70px;top:479.00px;font-size:12px;line-height:13.20px;color:#fff;font-weight:normal;font-family:'Liberation Sans', sans-serif;transform:scaleX(1.0333);transform-origin:0 0;">0</div>
<div class="t" style="left:320.60px;top:502.00px;font-size:12px;line-height:13.20px;color:#fff;font-weight:normal;font-family:'Liberation Sans', sans-serif;transform:scaleX(1.0125);transform-origin:0 0;">bbox_bottom[7:0]</div>
<div class="t" style="left:453.70px;top:502.00px;font-size:12px;line-height:13.20px;color:#fff;font-weight:normal;font-family:'Liberation Sans', sans-serif;transform:scaleX(1.0333);transform-origin:0 0;">0</div>
<div class="t" style="left:320.60px;top:525.00px;font-size:12px;line-height:13.20px;color:#fff;font-weight:normal;font-family:'Liberation Sans', sans-serif;transform:scaleX(1.0125);transform-origin:0 0;">centroid_y[7:0]</div>
<div class="t" style="left:453.70px;top:525.00px;font-size:12px;line-height:13.20px;color:#fff;font-weight:normal;font-family:'Liberation Sans', sans-serif;transform:scaleX(1.0333);transform-origin:0 0;">0</div>
<div class="t" style="left:320.60px;top:548.00px;font-size:12px;line-height:13.20px;color:#fff;font-weight:normal;font-family:'Liberation Sans', sans-serif;transform:scaleX(1.0125);transform-origin:0 0;">x[8:0]</div>
<div class="t" style="left:453.70px;top:548.00px;font-size:12px;line-height:13.20px;color:#fff;font-weight:normal;font-family:'Liberation Sans', sans-serif;transform:scaleX(1.0333);transform-origin:0 0;">14</div>
<div class="t" style="left:320.60px;top:571.00px;font-size:12px;line-height:13.20px;color:#fff;font-weight:normal;font-family:'Liberation Sans', sans-serif;transform:scaleX(1.0125);transform-origin:0 0;">y[7:0]</div>
<div class="t" style="left:453.70px;top:571.00px;font-size:12px;line-height:13.20px;color:#fff;font-weight:normal;font-family:'Liberation Sans', sans-serif;transform:scaleX(1.0333);transform-origin:0 0;">0</div>
<div class="t" style="left:320.60px;top:594.00px;font-size:12px;line-height:13.20px;color:#fff;font-weight:normal;font-family:'Liberation Sans', sans-serif;transform:scaleX(1.0125);transform-origin:0 0;">state[4:0]</div>
<div class="t" style="left:453.70px;top:594.00px;font-size:12px;line-height:13.20px;color:#fff;font-weight:normal;font-family:'Liberation Sans', sans-serif;transform:scaleX(1.0333);transform-origin:0 0;">4</div>
<div class="t" style="left:320.60px;top:617.00px;font-size:12px;line-height:13.20px;color:#fff;font-weight:normal;font-family:'Liberation Sans', sans-serif;transform:scaleX(1.0125);transform-origin:0 0;">toggle_line</div>
<div class="t" style="left:453.70px;top:617.00px;font-size:12px;line-height:13.20px;color:#fff;font-weight:normal;font-family:'Liberation Sans', sans-serif;transform:scaleX(1.0333);transform-origin:0 0;">0</div>
<div class="t" style="left:320.60px;top:640.00px;font-size:12px;line-height:13.20px;color:#fff;font-weight:normal;font-family:'Liberation Sans', sans-serif;transform:scaleX(1.0125);transform-origin:0 0;">left[11:0]</div>
<div class="t" style="left:453.70px;top:640.00px;font-size:12px;line-height:13.20px;color:#fff;font-weight:normal;font-family:'Liberation Sans', sans-serif;transform:scaleX(1.0333);transform-origin:0 0;">0</div>
<div class="t" style="left:320.60px;top:663.00px;font-size:12px;line-height:13.20px;color:#fff;font-weight:normal;font-family:'Liberation Sans', sans-serif;transform:scaleX(1.0125);transform-origin:0 0;">up[11:0]</div>
<div class="t" style="left:453.70px;top:663.00px;font-size:12px;line-height:13.20px;color:#fff;font-weight:normal;font-family:'Liberation Sans', sans-serif;transform:scaleX(1.0333);transform-origin:0 0;">0</div>
<div class="t" style="left:320.60px;top:686.00px;font-size:12px;line-height:13.20px;color:#fff;font-weight:normal;font-family:'Liberation Sans', sans-serif;transform:scaleX(1.0125);transform-origin:0 0;">upleft[11:0]</div>
<div class="t" style="left:453.70px;top:686.00px;font-size:12px;line-height:13.20px;color:#fff;font-weight:normal;font-family:'Liberation Sans', sans-serif;transform:scaleX(1.0333);transform-origin:0 0;">0</div>
<svg style="position:absolute;left:281px;top:243px;" width="161" height="460" viewBox="281 243 161 460"><path d="M304 248.5 H307.5 V257.5" fill="none" stroke="#4fa050" stroke-width="1.2"/><path d="M311.2 255 V248.5 H314 V255" fill="#0a4a0a" stroke="#4fa050" stroke-width="1.2"/><circle cx="311.6" cy="256.8" r="3.2" fill="#eea450"/><circle cx="311.8" cy="256.6" r="1.3" fill="#f6cc78"/><path d="M304 271.5 H307.5 V280.5" fill="none" stroke="#4fa050" stroke-width="1.2"/><path d="M311.2 278 V271.5 H314 V278" fill="#0a4a0a" stroke="#4fa050" stroke-width="1.2"/><circle cx="311.6" cy="279.8" r="3.2" fill="#eea450"/><circle cx="311.8" cy="279.6" r="1.3" fill="#f6cc78"/><path d="M304 294.5 H307.5 V303.5" fill="none" stroke="#4fa050" stroke-width="1.2"/><path d="M311.2 301 V294.5 H314 V301" fill="#0a4a0a" stroke="#4fa050" stroke-width="1.2"/><circle cx="311.6" cy="302.8" r="3.2" fill="#eea450"/><circle cx="311.8" cy="302.6" r="1.3" fill="#f6cc78"/><path d="M304 317.5 H307.5 V326.5" fill="none" stroke="#4fa050" stroke-width="1.2"/><path d="M311.2 324 V317.5 H314 V324" fill="#0a4a0a" stroke="#4fa050" stroke-width="1.2"/><circle cx="311.6" cy="325.8" r="3.2" fill="#eea450"/><circle cx="311.8" cy="325.6" r="1.3" fill="#f6cc78"/><path d="M304 340.5 H307.5 V349.5" fill="none" stroke="#4fa050" stroke-width="1.2"/><path d="M311.2 347 V340.5 H314 V347" fill="#0a4a0a" stroke="#4fa050" stroke-width="1.2"/><circle cx="311.6" cy="348.8" r="3.2" fill="#eea450"/><circle cx="311.8" cy="348.6" r="1.3" fill="#f6cc78"/><path d="M304 363.5 H307.5 V372.5" fill="none" stroke="#4fa050" stroke-width="1.2"/><path d="M311.2 370 V363.5 H314 V370" fill="#0a4a0a" stroke="#4fa050" stroke-width="1.2"/><circle cx="311.6" cy="371.8" r="3.2" fill="#eea450"/><circle cx="311.8" cy="371.6" r="1.3" fill="#f6cc78"/><path d="M304 386.5 H307.5 V395.5" fill="none" stroke="#4fa050" stroke-width="1.2"/><path d="M311.2 393 V386.5 H314 V393" fill="#0a4a0a" stroke="#4fa050" stroke-width="1.2"/><circle cx="311.6" cy="394.8" r="3.2" fill="#eea450"/><circle cx="311.8" cy="394.6" r="1.3" fill="#f6cc78"/><path d="M291.5 411.2 L296 415.5 L291.5 419.8" fill="none" stroke="#a8a8a8" stroke-width="1.3"/><path d="M304 410 H308.3 L310 413.2 L311.7 410 H316 V417 H304 Z" fill="#a6cfdc"/><circle cx="310" cy="417" r="3.3" fill="#e4e4e4"/><circle cx="310" cy="417" r="1.5" fill="#6e6e6e"/><path d="M291.5 434.2 L296 438.5 L291.5 442.8" fill="none" stroke="#a8a8a8" stroke-width="1.3"/><path d="M304 433 H308.3 L310 436.2 L311.7 433 H316 V440 H304 Z" fill="#a6cfdc"/><circle cx="310" cy="440" r="3.3" fill="#e4e4e4"/><circle cx="310" cy="440" r="1.5" fill="#6e6e6e"/><path d="M291.5 457.2 L296 461.5 L291.5 465.8" fill="none" stroke="#a8a8a8" stroke-width="1.3"/><path d="M304 456 H308.3 L310 459.2 L311.7 456 H316 V463 H304 Z" fill="#a6cfdc"/><circle cx="310" cy="463" r="3.3" fill="#e4e4e4"/><circle cx="310" cy="463" r="1.5" fill="#6e6e6e"/><path d="M291.5 480.2 L296 484.5 L291.5 488.8" fill="none" stroke="#a8a8a8" stroke-width="1.3"/><path d="M304 479 H308.3 L310 482.2 L311.7 479 H316 V486 H304 Z" fill="#a6cfdc"/><circle cx="310" cy="486" r="3.3" fill="#e4e4e4"/><circle cx="310" cy="486" r="1.5" fill="#6e6e6e"/><path d="M291.5 503.2 L296 507.5 L291.5 511.8" fill="none" stroke="#a8a8a8" stroke-width="1.3"/><path d="M304 502 H308.3 L310 505.2 L311.7 502 H316 V509 H304 Z" fill="#a6cfdc"/><circle cx="310" cy="509" r="3.3" fill="#e4e4e4"/><circle cx="310" cy="509" r="1.5" fill="#6e6e6e"/><path d="M291.5 526.2 L296 530.5 L291.5 534.8" fill="none" stroke="#a8a8a8" stroke-width="1.3"/><path d="M304 525 H308.3 L310 528.2 L311.7 525 H316 V532 H304 Z" fill="#a6cfdc"/><circle cx="310" cy="532" r="3.3" fill="#e4e4e4"/><circle cx="310" cy="532" r="1.5" fill="#6e6e6e"/><path d="M291.5 549.2 L296 553.5 L291.5 557.8" fill="none" stroke="#a8a8a8" stroke-width="1.3"/><path d="M304 548 H308.3 L310 551.2 L311.7 548 H316 V555 H304 Z" fill="#a6cfdc"/><circle cx="310" cy="555.2" r="3.3" fill="#eea450"/><circle cx="310.2" cy="555" r="1.3" fill="#f6cc78"/><path d="M291.5 572.2 L296 576.5 L291.5 580.8" fill="none" stroke="#a8a8a8" stroke-width="1.3"/><path d="M304 571 H308.3 L310 574.2 L311.7 571 H316 V578 H304 Z" fill="#a6cfdc"/><circle cx="310" cy="578.2" r="3.3" fill="#eea450"/><circle cx="310.2" cy="578" r="1.3" fill="#f6cc78"/><path d="M291.5 595.2 L296 599.5 L291.5 603.8" fill="none" stroke="#a8a8a8" stroke-width="1.3"/><path d="M304 594 H308.3 L310 597.2 L311.7 594 H316 V601 H304 Z" fill="#a6cfdc"/><circle cx="310" cy="601.2" r="3.3" fill="#eea450"/><circle cx="310.2" cy="601" r="1.3" fill="#f6cc78"/><path d="M304 616.5 H307.5 V625.5" fill="none" stroke="#4fa050" stroke-width="1.2"/><path d="M311.2 623 V616.5 H314 V623" fill="#0a4a0a" stroke="#4fa050" stroke-width="1.2"/><circle cx="311.6" cy="624.8" r="3.2" fill="#eea450"/><circle cx="311.8" cy="624.6" r="1.3" fill="#f6cc78"/><path d="M291.5 641.2 L296 645.5 L291.5 649.8" fill="none" stroke="#a8a8a8" stroke-width="1.3"/><path d="M304 640 H308.3 L310 643.2 L311.7 640 H316 V647 H304 Z" fill="#a6cfdc"/><circle cx="310" cy="647.2" r="3.3" fill="#eea450"/><circle cx="310.2" cy="647" r="1.3" fill="#f6cc78"/><path d="M291.5 664.2 L296 668.5 L291.5 672.8" fill="none" stroke="#a8a8a8" stroke-width="1.3"/><path d="M304 663 H308.3 L310 666.2 L311.7 663 H316 V670 H304 Z" fill="#a6cfdc"/><circle cx="310" cy="670.2" r="3.3" fill="#eea450"/><circle cx="310.2" cy="670" r="1.3" fill="#f6cc78"/><path d="M291.5 687.2 L296 691.5 L291.5 695.8" fill="none" stroke="#a8a8a8" stroke-width="1.3"/><path d="M304 686 H308.3 L310 689.2 L311.7 686 H316 V693 H304 Z" fill="#a6cfdc"/><circle cx="310" cy="693.2" r="3.3" fill="#eea450"/><circle cx="310.2" cy="693" r="1.3" fill="#f6cc78"/></svg>
<svg style="position:absolute;left:575px;top:187px;" width="1318" height="554" viewBox="575 187 1318 554"><path d="M666.5 244 V702" stroke="#c8c8c8" stroke-width="1"/><path d="M766.5 244 V702" stroke="#c8c8c8" stroke-width="1"/><path d="M866.5 244 V702" stroke="#c8c8c8" stroke-width="1"/><path d="M966.5 244 V702" stroke="#c8c8c8" stroke-width="1"/><path d="M1066.5 244 V702" stroke="#c8c8c8" stroke-width="1"/><path d="M1166.5 244 V702" stroke="#c8c8c8" stroke-width="1"/><path d="M1266.5 244 V702" stroke="#c8c8c8" stroke-width="1"/><path d="M1366.5 244 V702" stroke="#c8c8c8" stroke-width="1"/><path d="M1466.5 244 V702" stroke="#c8c8c8" stroke-width="1"/><path d="M1566.5 244 V702" stroke="#c8c8c8" stroke-width="1"/><path d="M1666.5 244 V702" stroke="#c8c8c8" stroke-width="1"/><path d="M1766.5 244 V702" stroke="#c8c8c8" stroke-width="1"/><path d="M1866.5 244 V702" stroke="#c8c8c8" stroke-width="1"/><path d="M578 243.5 H1891" stroke="#fff" stroke-width="1"/><path d="M586.5 239 V243 M596.5 239 V243 M606.5 239 V243 M616.5 235 V243 M626.5 239 V243 M636.5 239 V243 M646.5 239 V243 M656.5 239 V243 M666.5 227 V243 M676.5 239 V243 M686.5 239 V243 M696.5 239 V243 M706.5 239 V243 M716.5 235 V243 M726.5 239 V243 M736.5 239 V243 M746.5 239 V243 M756.5 239 V243 M766.5 227 V243 M776.5 239 V243 M786.5 239 V243 M796.5 239 V243 M806.5 239 V243 M816.5 235 V243 M826.5 239 V243 M836.5 239 V243 M846.5 239 V243 M856.5 239 V243 M866.5 227 V243 M876.5 239 V243 M886.5 239 V243 M896.5 239 V243 M906.5 239 V243 M916.5 235 V243 M926.5 239 V243 M936.5 239 V243 M946.5 239 V243 M956.5 239 V243 M966.5 227 V243 M976.5 239 V243 M986.5 239 V243 M996.5 239 V243 M1006.5 239 V243 M1016.5 235 V243 M1026.5 239 V243 M1036.5 239 V243 M1046.5 239 V243 M1056.5 239 V243 M1066.5 227 V243 M1076.5 239 V243 M1086.5 239 V243 M1096.5 239 V243 M1106.5 239 V243 M1116.5 235 V243 M1126.5 239 V243 M1136.5 239 V243 M1146.5 239 V243 M1156.5 239 V243 M1166.5 227 V243 M1176.5 239 V243 M1186.5 239 V243 M1196.5 239 V243 M1206.5 239 V243 M1216.5 235 V243 M1226.5 239 V243 M1236.5 239 V243 M1246.5 239 V243 M1256.5 239 V243 M1266.5 227 V243 M1276.5 239 V243 M1286.5 239 V243 M1296.5 239 V243 M1306.5 239 V243 M1316.5 235 V243 M1326.5 239 V243 M1336.5 239 V243 M1346.5 239 V243 M1356.5 239 V243 M1366.5 227 V243 M1376.5 239 V243 M1386.5 239 V243 M1396.5 239 V243 M1406.5 239 V243 M1416.5 235 V243 M1426.5 239 V243 M1436.5 239 V243 M1446.5 239 V243 M1456.5 239 V243 M1466.5 227 V243 M1476.5 239 V243 M1486.5 239 V243 M1496.5 239 V243 M1506.5 239 V243 M1516.5 235 V243 M1526.5 239 V243 M1536.5 239 V243 M1546.5 239 V243 M1556.5 239 V243 M1566.5 227 V243 M1576.5 239 V243 M1586.5 239 V243 M1596.5 239 V243 M1606.5 239 V243 M1616.5 235 V243 M1626.5 239 V243 M1636.5 239 V243 M1646.5 239 V243 M1656.5 239 V243 M1666.5 227 V243 M1676.5 239 V243 M1686.5 239 V243 M1696.5 239 V243 M1706.5 239 V243 M1716.5 235 V243 M1726.5 239 V243 M1736.5 239 V243 M1746.5 239 V243 M1756.5 239 V243 M1766.5 227 V243 M1776.5 239 V243 M1786.5 239 V243 M1796.5 239 V243 M1806.5 239 V243 M1816.5 235 V243 M1826.5 239 V243 M1836.5 239 V243 M1846.5 239 V243 M1856.5 239 V243 M1866.5 227 V243 M1876.5 239 V243 M1886.5 239 V243 " stroke="#fff" stroke-width="1"/><g font-family="Liberation Mono" font-size="11.7" fill="#fff"><rect x="667" y="227" width="64" height="11" fill="#000"/><text x="668" y="235.5" fill="#fff">44,700 ns</text><rect x="767" y="227" width="64" height="11" fill="#000"/><text x="768" y="235.5" fill="#fff">44,720 ns</text><rect x="867" y="227" width="64" height="11" fill="#000"/><text x="868" y="235.5" fill="#fff">44,740 ns</text><rect x="967" y="227" width="64" height="11" fill="#000"/><text x="968" y="235.5" fill="#fff">44,760 ns</text><rect x="1067" y="227" width="64" height="11" fill="#000"/><text x="1068" y="235.5" fill="#fff">44,780 ns</text><rect x="1167" y="227" width="64" height="11" fill="#000"/><text x="1168" y="235.5" fill="#fff">44,800 ns</text><rect x="1267" y="227" width="64" height="11" fill="#000"/><text x="1268" y="235.5" fill="#fff">44,820 ns</text><rect x="1367" y="227" width="64" height="11" fill="#000"/><text x="1368" y="235.5" fill="#fff">44,840 ns</text><rect x="1467" y="227" width="64" height="11" fill="#000"/><text x="1468" y="235.5" fill="#fff">44,860 ns</text><rect x="1567" y="227" width="64" height="11" fill="#000"/><text x="1568" y="235.5" fill="#fff">44,880 ns</text><rect x="1667" y="227" width="64" height="11" fill="#000"/><text x="1668" y="235.5" fill="#fff">44,900 ns</text><rect x="1767" y="227" width="64" height="11" fill="#000"/><text x="1768" y="235.5" fill="#fff">44,920 ns</text><rect x="1867" y="227" width="26" height="11" fill="#000"/><text x="1868" y="235.5" fill="#fff">44,940 ns</text></g><rect x="591" y="247" width="25" height="17" fill="#005600"/><rect x="641" y="247" width="25" height="17" fill="#005600"/><rect x="691" y="247" width="25" height="17" fill="#005600"/><rect x="741" y="247" width="25" height="17" fill="#005600"/><rect x="791" y="247" width="25" height="17" fill="#005600"/><rect x="841" y="247" width="25" height="17" fill="#005600"/><rect x="891" y="247" width="25" height="17" fill="#005600"/><rect x="941" y="247" width="25" height="17" fill="#005600"/><rect x="991" y="247" width="25" height="17" fill="#005600"/><rect x="1041" y="247" width="25" height="17" fill="#005600"/><rect x="1091" y="247" width="25" height="17" fill="#005600"/><rect x="1141" y="247" width="25" height="17" fill="#005600"/><rect x="1191" y="247" width="25" height="17" fill="#005600"/><rect x="1241" y="247" width="25" height="17" fill="#005600"/><rect x="1291" y="247" width="25" height="17" fill="#005600"/><rect x="1341" y="247" width="25" height="17" fill="#005600"/><rect x="1391" y="247" width="25" height="17" fill="#005600"/><rect x="1441" y="247" width="25" height="17" fill="#005600"/><rect x="1491" y="247" width="25" height="17" fill="#005600"/><rect x="1541" y="247" width="25" height="17" fill="#005600"/><rect x="1591" y="247" width="25" height="17" fill="#005600"/><rect x="1641" y="247" width="25" height="17" fill="#005600"/><rect x="1691" y="247" width="25" height="17" fill="#005600"/><rect x="1741" y="247" width="25" height="17" fill="#005600"/><rect x="1791" y="247" width="25" height="17" fill="#005600"/><rect x="1841" y="247" width="25" height="17" fill="#005600"/><path d="M578 264.5 H591.5 V247.5 H616.5 V264.5 H641.5 V247.5 H666.5 V264.5 H691.5 V247.5 H716.5 V264.5 H741.5 V247.5 H766.5 V264.5 H791.5 V247.5 H816.5 V264.5 H841.5 V247.5 H866.5 V264.5 H891.5 V247.5 H916.5 V264.5 H941.5 V247.5 H966.5 V264.5 H991.5 V247.5 H1016.5 V264.5 H1041.5 V247.5 H1066.5 V264.5 H1091.5 V247.5 H1116.5 V264.5 H1141.5 V247.5 H1166.5 V264.5 H1191.5 V247.5 H1216.5 V264.5 H1241.5 V247.5 H1266.5 V264.5 H1291.5 V247.5 H1316.5 V264.5 H1341.5 V247.5 H1366.5 V264.5 H1391.5 V247.5 H1416.5 V264.5 H1441.5 V247.5 H1466.5 V264.5 H1491.5 V247.5 H1516.5 V264.5 H1541.5 V247.5 H1566.5 V264.5 H1591.5 V247.5 H1616.5 V264.5 H1641.5 V247.5 H1666.5 V264.5 H1691.5 V247.5 H1716.5 V264.5 H1741.5 V247.5 H1766.5 V264.5 H1791.5 V247.5 H1816.5 V264.5 H1841.5 V247.5 H1866.5 V264.5 H1891" fill="none" stroke="#40d040" stroke-width="1"/><path d="M578 287.5 H1891" fill="none" stroke="#40d040" stroke-width="1"/><rect x="691" y="293" width="25" height="17" fill="#005600"/><rect x="841" y="293" width="25" height="17" fill="#005600"/><rect x="991" y="293" width="25" height="17" fill="#005600"/><rect x="1141" y="293" width="25" height="17" fill="#005600"/><rect x="1291" y="293" width="25" height="17" fill="#005600"/><rect x="1441" y="293" width="25" height="17" fill="#005600"/><rect x="1591" y="293" width="25" height="17" fill="#005600"/><rect x="1741" y="293" width="25" height="17" fill="#005600"/><path d="M578 310.5 H691.5 V293.5 H716.5 V310.5 H841.5 V293.5 H866.5 V310.5 H991.5 V293.5 H1016.5 V310.5 H1141.5 V293.5 H1166.5 V310.5 H1291.5 V293.5 H1316.5 V310.5 H1441.5 V293.5 H1466.5 V310.5 H1591.5 V293.5 H1616.5 V310.5 H1741.5 V293.5 H1766.5 V310.5 H1891" fill="none" stroke="#40d040" stroke-width="1"/><path d="M578 333.5 H1891" fill="none" stroke="#40d040" stroke-width="1"/><path d="M578 356.5 H1891" fill="none" stroke="#40d040" stroke-width="1"/><path d="M578 379.5 H1891" fill="none" stroke="#40d040" stroke-width="1"/><path d="M578 632.5 H1891" fill="none" stroke="#40d040" stroke-width="1"/><rect x="578" y="385" width="113" height="17" fill="#005600"/><path d="M578 385.5 H691.5 V402.5 H1891" fill="none" stroke="#40d040"/><rect x="578" y="408" width="1313" height="17" fill="#000"/><path d="M578 408.5 H1891 M578 425.5 H1891 " fill="none" stroke="#40d040" stroke-width="1"/><g font-family="Liberation Mono" font-size="11.7" fill="#fff" text-anchor="middle"><text x="1233.7" y="421.2">0</text></g><rect x="578" y="431" width="1313" height="17" fill="#000"/><path d="M578 431.5 H1891 M578 448.5 H1891 " fill="none" stroke="#40d040" stroke-width="1"/><g font-family="Liberation Mono" font-size="11.7" fill="#fff" text-anchor="middle"><text x="1233.7" y="444.2">0</text></g><rect x="578" y="454" width="1313" height="17" fill="#000"/><path d="M578 454.5 H1891 M578 471.5 H1891 " fill="none" stroke="#40d040" stroke-width="1"/><g font-family="Liberation Mono" font-size="11.7" fill="#fff" text-anchor="middle"><text x="1233.7" y="467.2">0</text></g><rect x="578" y="477" width="1313" height="17" fill="#000"/><path d="M578 477.5 H1891 M578 494.5 H1891 " fill="none" stroke="#40d040" stroke-width="1"/><g font-family="Liberation Mono" font-size="11.7" fill="#fff" text-anchor="middle"><text x="1233.7" y="490.2">0</text></g><rect x="578" y="500" width="1313" height="17" fill="#000"/><path d="M578 500.5 H1891 M578 517.5 H1891 " fill="none" stroke="#40d040" stroke-width="1"/><g font-family="Liberation Mono" font-size="11.7" fill="#fff" text-anchor="middle"><text x="1233.7" y="513.2">0</text></g><rect x="578" y="523" width="1313" height="17" fill="#000"/><path d="M578 523.5 H1891 M578 540.5 H1891 " fill="none" stroke="#40d040" stroke-width="1"/><g font-family="Liberation Mono" font-size="11.7" fill="#fff" text-anchor="middle"><text x="1233.7" y="536.2">0</text></g><rect x="578" y="569" width="1313" height="17" fill="#000"/><path d="M578 569.5 H1891 M578 586.5 H1891 " fill="none" stroke="#40d040" stroke-width="1"/><g font-family="Liberation Mono" font-size="11.7" fill="#fff" text-anchor="middle"><text x="1233.7" y="582.2">0</text></g><rect x="578" y="661" width="1313" height="17" fill="#000"/><path d="M578 661.5 H1891 M578 678.5 H1891 " fill="none" stroke="#40d040" stroke-width="1"/><g font-family="Liberation Mono" font-size="11.7" fill="#fff" text-anchor="middle"><text x="1233.7" y="674.2">0</text></g><rect x="578" y="684" width="1313" height="17" fill="#000"/><path d="M578 684.5 H1891 M578 701.5 H1891 " fill="none" stroke="#40d040" stroke-width="1"/><g font-family="Liberation Mono" font-size="11.7" fill="#fff" text-anchor="middle"><text x="1233.7" y="697.2">0</text></g><rect x="578" y="546" width="1313" height="17" fill="#000"/><path d="M578 546.5 H637.5 M578 563.5 H637.5 M645.5 546.5 H787.5 M645.5 563.5 H787.5 M795.5 546.5 H937.5 M795.5 563.5 H937.5 M945.5 546.5 H1087.5 M945.5 563.5 H1087.5 M1095.5 546.5 H1237.5 M1095.5 563.5 H1237.5 M1245.5 546.5 H1387.5 M1245.5 563.5 H1387.5 M1395.5 546.5 H1537.5 M1395.5 563.5 H1537.5 M1545.5 546.5 H1687.5 M1545.5 563.5 H1687.5 M1695.5 546.5 H1837.5 M1695.5 563.5 H1837.5 M1845.5 546.5 H1891 M1845.5 563.5 H1891 M637.5 546.5 L645.5 563.5 M637.5 563.5 L645.5 546.5 M787.5 546.5 L795.5 563.5 M787.5 563.5 L795.5 546.5 M937.5 546.5 L945.5 563.5 M937.5 563.5 L945.5 546.5 M1087.5 546.5 L1095.5 563.5 M1087.5 563.5 L1095.5 546.5 M1237.5 546.5 L1245.5 563.5 M1237.5 563.5 L1245.5 546.5 M1387.5 546.5 L1395.5 563.5 M1387.5 563.5 L1395.5 546.5 M1537.5 546.5 L1545.5 563.5 M1537.5 563.5 L1545.5 546.5 M1687.5 546.5 L1695.5 563.5 M1687.5 563.5 L1695.5 546.5 M1837.5 546.5 L1845.5 563.5 M1837.5 563.5 L1845.5 546.5 " fill="none" stroke="#40d040" stroke-width="1"/><g font-family="Liberation Mono" font-size="11.7" fill="#fff" text-anchor="middle"><text x="606.7" y="559.2">12</text><text x="715.2" y="559.2">13</text><text x="865.2" y="559.2">14</text><text x="1015.2" y="559.2">15</text><text x="1165.2" y="559.2">16</text><text x="1315.2" y="559.2">17</text><text x="1465.2" y="559.2">18</text><text x="1615.2" y="559.2">19</text><text x="1765.2" y="559.2">20</text><text x="1867.2" y="559.2">21</text></g><rect x="578" y="592" width="1313" height="17" fill="#000"/><path d="M578 592.5 H587.5 M578 609.5 H587.5 M595.5 592.5 H637.5 M595.5 609.5 H637.5 M645.5 592.5 H687.5 M645.5 609.5 H687.5 M695.5 592.5 H737.5 M695.5 609.5 H737.5 M745.5 592.5 H787.5 M745.5 609.5 H787.5 M795.5 592.5 H837.5 M795.5 609.5 H837.5 M845.5 592.5 H887.5 M845.5 609.5 H887.5 M895.5 592.5 H937.5 M895.5 609.5 H937.5 M945.5 592.5 H987.5 M945.5 609.5 H987.5 M995.5 592.5 H1037.5 M995.5 609.5 H1037.5 M1045.5 592.5 H1087.5 M1045.5 609.5 H1087.5 M1095.5 592.5 H1137.5 M1095.5 609.5 H1137.5 M1145.5 592.5 H1187.5 M1145.5 609.5 H1187.5 M1195.5 592.5 H1237.5 M1195.5 609.5 H1237.5 M1245.5 592.5 H1287.5 M1245.5 609.5 H1287.5 M1295.5 592.5 H1337.5 M1295.5 609.5 H1337.5 M1345.5 592.5 H1387.5 M1345.5 609.5 H1387.5 M1395.5 592.5 H1437.5 M1395.5 609.5 H1437.5 M1445.5 592.5 H1487.5 M1445.5 609.5 H1487.5 M1495.5 592.5 H1537.5 M1495.5 609.5 H1537.5 M1545.5 592.5 H1587.5 M1545.5 609.5 H1587.5 M1595.5 592.5 H1637.5 M1595.5 609.5 H1637.5 M1645.5 592.5 H1687.5 M1645.5 609.5 H1687.5 M1695.5 592.5 H1737.5 M1695.5 609.5 H1737.5 M1745.5 592.5 H1787.5 M1745.5 609.5 H1787.5 M1795.5 592.5 H1837.5 M1795.5 609.5 H1837.5 M1845.5 592.5 H1891 M1845.5 609.5 H1891 M587.5 592.5 L595.5 609.5 M587.5 609.5 L595.5 592.5 M637.5 592.5 L645.5 609.5 M637.5 609.5 L645.5 592.5 M687.5 592.5 L695.5 609.5 M687.5 609.5 L695.5 592.5 M737.5 592.5 L745.5 609.5 M737.5 609.5 L745.5 592.5 M787.5 592.5 L795.5 609.5 M787.5 609.5 L795.5 592.5 M837.5 592.5 L845.5 609.5 M837.5 609.5 L845.5 592.5 M887.5 592.5 L895.5 609.5 M887.5 609.5 L895.5 592.5 M937.5 592.5 L945.5 609.5 M937.5 609.5 L945.5 592.5 M987.5 592.5 L995.5 609.5 M987.5 609.5 L995.5 592.5 M1037.5 592.5 L1045.5 609.5 M1037.5 609.5 L1045.5 592.5 M1087.5 592.5 L1095.5 609.5 M1087.5 609.5 L1095.5 592.5 M1137.5 592.5 L1145.5 609.5 M1137.5 609.5 L1145.5 592.5 M1187.5 592.5 L1195.5 609.5 M1187.5 609.5 L1195.5 592.5 M1237.5 592.5 L1245.5 609.5 M1237.5 609.5 L1245.5 592.5 M1287.5 592.5 L1295.5 609.5 M1287.5 609.5 L1295.5 592.5 M1337.5 592.5 L1345.5 609.5 M1337.5 609.5 L1345.5 592.5 M1387.5 592.5 L1395.5 609.5 M1387.5 609.5 L1395.5 592.5 M1437.5 592.5 L1445.5 609.5 M1437.5 609.5 L1445.5 592.5 M1487.5 592.5 L1495.5 609.5 M1487.5 609.5 L1495.5 592.5 M1537.5 592.5 L1545.5 609.5 M1537.5 609.5 L1545.5 592.5 M1587.5 592.5 L1595.5 609.5 M1587.5 609.5 L1595.5 592.5 M1637.5 592.5 L1645.5 609.5 M1637.5 609.5 L1645.5 592.5 M1687.5 592.5 L1695.5 609.5 M1687.5 609.5 L1695.5 592.5 M1737.5 592.5 L1745.5 609.5 M1737.5 609.5 L1745.5 592.5 M1787.5 592.5 L1795.5 609.5 M1787.5 609.5 L1795.5 592.5 M1837.5 592.5 L1845.5 609.5 M1837.5 609.5 L1845.5 592.5 " fill="none" stroke="#40d040" stroke-width="1"/><g font-family="Liberation Mono" font-size="11.7" fill="#fff" text-anchor="middle"><rect x="579.5" y="597.5" width="5" height="7" fill="none" stroke="#fff" stroke-width="1.2"/><text x="615.2" y="605.2">26</text><text x="665.2" y="605.2">3</text><text x="715.2" y="605.2">4</text><text x="765.2" y="605.2">26</text><text x="815.2" y="605.2">3</text><text x="865.2" y="605.2">4</text><text x="915.2" y="605.2">26</text><text x="965.2" y="605.2">3</text><text x="1015.2" y="605.2">4</text><text x="1065.2" y="605.2">26</text><text x="1115.2" y="605.2">3</text><text x="1165.2" y="605.2">4</text><text x="1215.2" y="605.2">26</text><text x="1265.2" y="605.2">3</text><text x="1315.2" y="605.2">4</text><text x="1365.2" y="605.2">26</text><text x="1415.2" y="605.2">3</text><text x="1465.2" y="605.2">4</text><text x="1515.2" y="605.2">26</text><text x="1565.2" y="605.2">3</text><text x="1615.2" y="605.2">4</text><text x="1665.2" y="605.2">26</text><text x="1715.2" y="605.2">3</text><text x="1765.2" y="605.2">4</text><text x="1815.2" y="605.2">26</text><text x="1867.2" y="605.2">3</text></g><rect x="578" y="638" width="1313" height="17" fill="#000"/><path d="M578 638.5 H837.5 M578 655.5 H837.5 M845.5 638.5 H1891 M845.5 655.5 H1891 M837.5 638.5 L845.5 655.5 M837.5 655.5 L845.5 638.5 " fill="none" stroke="#40d040" stroke-width="1"/><g font-family="Liberation Mono" font-size="11.7" fill="#fff" text-anchor="middle"><text x="706.7" y="651.2">1</text><text x="1367.2" y="651.2">0</text></g><path d="M578 702.5 H1891" stroke="#e8ffe8" stroke-width="1"/><rect x="870" y="191" width="96" height="12" fill="#ffff00"/><text x="873" y="200.5" font-family="Liberation Mono" font-size="11.7" fill="#000">44,741.000 ns</text><rect x="870" y="203" width="2" height="500" fill="#ffff00"/></svg>
<div style="left:278px;top:772px;width:1632px;height:237px;border:3px solid #4673c6;background:#fff;"></div>
<div style="left:281px;top:775px;width:1626px;height:28px;background:#ececec;"></div>
<div style="left:281px;top:775px;width:108px;height:28px;background:#fff;"></div>
<div style="left:469px;top:777px;width:1px;height:24px;background:#c8c8c8;"></div>
<div style="left:513px;top:777px;width:1px;height:24px;background:#c8c8c8;"></div>
<div class="t" style="left:287.20px;top:783.00px;font-size:12px;line-height:13.20px;color:#111;font-weight:bold;font-family:'Liberation Sans', sans-serif;transform:scaleX(0.9705);transform-origin:0 0;">Tcl Console</div>
<div class="t" style="left:395.20px;top:783.00px;font-size:12px;line-height:13.20px;color:#8c8c8c;font-weight:bold;font-family:'Liberation Sans', sans-serif;transform:scaleX(1.0181);transform-origin:0 0;">Messages</div>
<div class="t" style="left:476.60px;top:783.00px;font-size:12px;line-height:13.20px;color:#8c8c8c;font-weight:bold;font-family:'Liberation Sans', sans-serif;transform:scaleX(0.8971);transform-origin:0 0;">Log</div>
<svg style="position:absolute;left:360px;top:775px;" width="1550" height="28" viewBox="360 775 1550 28"><path d="M375 785 L382.5 792.5 M382.5 785 L375 792.5" stroke="#777" stroke-width="1.3"/><path d="M1829.44 787.06 C1829.44 783.68 1836.74 783.68 1836.74 786.88 C1836.74 789.16 1833.09 788.61 1833.09 791.08" fill="none" stroke="#8e8e8e" stroke-width="2.0"/><rect x="1831.90" y="792.08" width="2.28" height="2.01" fill="#8e8e8e"/><rect x="1848" y="792" width="9" height="1.8" fill="#8e8e8e"/><rect x="1868.5" y="783.5" width="9" height="9" fill="none" stroke="#8e8e8e" stroke-width="1.4"/><path d="M1893.5 783.5 H1888.5 V792.5 H1897.5 V787.5" fill="none" stroke="#8e8e8e" stroke-width="1.3"/><path d="M1892 789 L1897.5 783.5 M1894.5 783.5 H1897.5 V786.5" fill="none" stroke="#8e8e8e" stroke-width="1.3"/></svg>
<svg style="position:absolute;left:281px;top:803px;" width="300" height="33" viewBox="281 803 300 33"><rect x="315" y="809" width="1" height="20" fill="#dcdcdc"/><rect x="350" y="809" width="1" height="20" fill="#dcdcdc"/><rect x="385" y="809" width="1" height="20" fill="#dcdcdc"/><rect x="420" y="809" width="1" height="20" fill="#dcdcdc"/><rect x="455" y="809" width="1" height="20" fill="#dcdcdc"/><rect x="490" y="809" width="1" height="20" fill="#dcdcdc"/><rect x="525" y="809" width="1" height="20" fill="#dcdcdc"/><circle cx="297" cy="818" r="5" fill="none" stroke="#2f4d91" stroke-width="2"/><path d="M300.5 821.5 L304 825" stroke="#2f4d91" stroke-width="2.6" stroke-linecap="round"/><path d="M327.5 812 H338.5 L333 817 Z M327.5 826 H338.5 L333 821 Z" fill="#2f4d91"/><rect x="327" y="818.2" width="12" height="1.8" fill="#2f4d91"/><path d="M362.5 817.5 L368 812 L373.5 817.5 Z M362.5 820.5 L368 826 L373.5 820.5 Z" fill="#2f4d91"/><rect x="362" y="818.3" width="12" height="1.5" fill="#2f4d91"/><rect x="398" y="812" width="3" height="14" fill="#2f4d91"/><rect x="405" y="812" width="3" height="14" fill="#2f4d91"/><rect x="432" y="812" width="9" height="11" fill="#2f4d91"/><rect x="434.5" y="814.5" width="9.5" height="11.5" fill="#fff" stroke="#2f4d91" stroke-width="1.5"/><rect x="436.5" y="817.5" width="5.5" height="1.2" fill="#2f4d91"/><rect x="436.5" y="820" width="5.5" height="1.2" fill="#2f4d91"/><rect x="436.5" y="822.5" width="5.5" height="1.2" fill="#2f4d91"/><rect x="467" y="812.5" width="13" height="13.5" fill="none" stroke="#2f4d91" stroke-width="1.5"/><rect x="470.5" y="812.5" width="6" height="13.5" fill="#2f4d91"/><path d="M467 816 H470.5 M476.5 816 H480" stroke="#2f4d91" stroke-width="1.2"/><path d="M467 819.5 H470.5 M476.5 819.5 H480" stroke="#2f4d91" stroke-width="1.2"/><path d="M467 823 H470.5 M476.5 823 H480" stroke="#2f4d91" stroke-width="1.2"/><rect x="502" y="812" width="12.5" height="2" fill="#2f4d91"/><rect x="506" y="810.5" width="4.5" height="2" fill="#2f4d91"/><path d="M503.5 815.5 H513 V826 H503.5 Z" fill="#2f4d91"/><rect x="506" y="817.5" width="1.5" height="6.5" fill="#fff"/><rect x="509" y="817.5" width="1.5" height="6.5" fill="#fff"/></svg>
<div style="left:281px;top:835px;width:1626px;height:1px;background:#e4e4e4;"></div>
<div style="left:313px;top:854px;width:1570px;height:85px;background:#a1b1ec;"></div>
<div style="left:313px;top:939px;width:182px;height:17px;background:#a1b1ec;"></div>
<div style="left:313px;top:855px;width:2px;height:16px;background:#000;"></div>
<svg style="position:absolute;left:295px;top:838px;" width="10" height="122" viewBox="295 838 10 122"><rect x="300" y="837.0" width="1" height="2.4" fill="#888"/><rect x="300" y="842.2" width="1" height="2.4" fill="#888"/><rect x="300" y="847.4" width="1" height="2.4" fill="#888"/><rect x="300" y="852.6" width="1" height="2.4" fill="#888"/><rect x="300" y="857.8" width="1" height="2.4" fill="#888"/><rect x="300" y="863.0" width="1" height="2.4" fill="#888"/><rect x="300" y="868.2" width="1" height="2.4" fill="#888"/><rect x="300" y="873.4" width="1" height="2.4" fill="#888"/><rect x="300" y="878.6" width="1" height="2.4" fill="#888"/><rect x="300" y="883.8" width="1" height="2.4" fill="#888"/><rect x="300" y="889.0" width="1" height="2.4" fill="#888"/><rect x="300" y="894.2" width="1" height="2.4" fill="#888"/><rect x="300" y="899.4" width="1" height="2.4" fill="#888"/><rect x="300" y="904.6" width="1" height="2.4" fill="#888"/><rect x="300" y="909.8" width="1" height="2.4" fill="#888"/><rect x="300" y="915.0" width="1" height="2.4" fill="#888"/><rect x="300" y="920.2" width="1" height="2.4" fill="#888"/><rect x="300" y="925.4" width="1" height="2.4" fill="#888"/><rect x="300" y="930.6" width="1" height="2.4" fill="#888"/><rect x="300" y="935.8" width="1" height="2.4" fill="#888"/><rect x="300" y="941.0" width="1" height="2.4" fill="#888"/><rect x="300" y="946.2" width="1" height="2.4" fill="#888"/><rect x="300" y="951.4" width="1" height="2.4" fill="#888"/></svg>
<div class="t" style="left:313px;top:840px;font-size:11.7px;line-height:14px;color:#000;font-family:'Liberation Mono', monospace;"># run 100us</div>
<div class="t" style="left:313px;top:857px;font-size:11.7px;line-height:14px;color:#000;font-family:'Liberation Mono', monospace;">OK: label 2 area=12 bbox=[L2 R5 T1 B3]</div>
<div class="t" style="left:313px;top:874px;font-size:11.7px;line-height:14px;color:#000;font-family:'Liberation Mono', monospace;">OK: label 1 area=8 bbox=[L9 R12 T0 B1]</div>
<div class="t" style="left:313px;top:891px;font-size:11.7px;line-height:14px;color:#000;font-family:'Liberation Mono', monospace;">OK: label 3 area=12 bbox=[L15 R17 T5 B8]</div>
<div class="t" style="left:313px;top:908px;font-size:11.7px;line-height:14px;color:#000;font-family:'Liberation Mono', monospace;">OK: label 4 area=5 bbox=[L19 R21 T5 B7]</div>
<div class="t" style="left:313px;top:925px;font-size:11.7px;line-height:14px;color:#000;font-family:'Liberation Mono', monospace;">OK: active=4 total_area=37</div>
<div class="t" style="left:313px;top:942px;font-size:11.7px;line-height:14px;color:#000;font-family:'Liberation Mono', monospace;">PASS: multi-component test</div>
<svg style="position:absolute;left:1883px;top:838px;" width="25" height="122" viewBox="1883 838 25 122"><path d="M1886 846 L1890 842 L1894 846" fill="none" stroke="#666" stroke-width="1.3"/><path d="M1886 951 L1890 955 L1894 951" fill="none" stroke="#666" stroke-width="1.3"/><rect x="1886" y="909.5" width="8" height="34.5" rx="4" fill="#c4c4c4"/><rect x="1897" y="848" width="9" height="98.5" fill="#e8cc2c"/><rect x="1897" y="856.5" width="9" height="4" fill="#e81010"/><rect x="1897" y="862.8" width="9" height="4" fill="#e81010"/><rect x="1897" y="904" width="9" height="3" fill="#e81010"/><rect x="1897" y="933" width="9" height="5" fill="#e81010"/><rect x="1897" y="940" width="9" height="4" fill="#e81010"/></svg>
<div style="left:1883px;top:836px;width:1px;height:122px;background:#f0f0f0;"></div>
<div style="left:313px;top:958px;width:1570px;height:17px;background:#fafafa;"></div>
<svg style="position:absolute;left:313px;top:958px;" width="1570" height="17" viewBox="313 958 1570 17"><path d="M322 964 L318.5 968 L322 972" fill="none" stroke="#666" stroke-width="1.3"/><path d="M1873.5 964 L1877 968 L1873.5 972" fill="none" stroke="#666" stroke-width="1.3"/><rect x="330" y="963.5" width="1150" height="8.5" rx="4.2" fill="#c4c4c4"/></svg>
<div style="left:284px;top:979px;width:1620px;height:24px;background:#fff;border:1px solid #c0c0c0;"></div>
<div class="t" style="left:291px;top:984px;font-size:11.7px;line-height:14px;color:#8a8a8a;font-family:'Liberation Mono', monospace;">Type a Tcl command here</div>
</body></html>
